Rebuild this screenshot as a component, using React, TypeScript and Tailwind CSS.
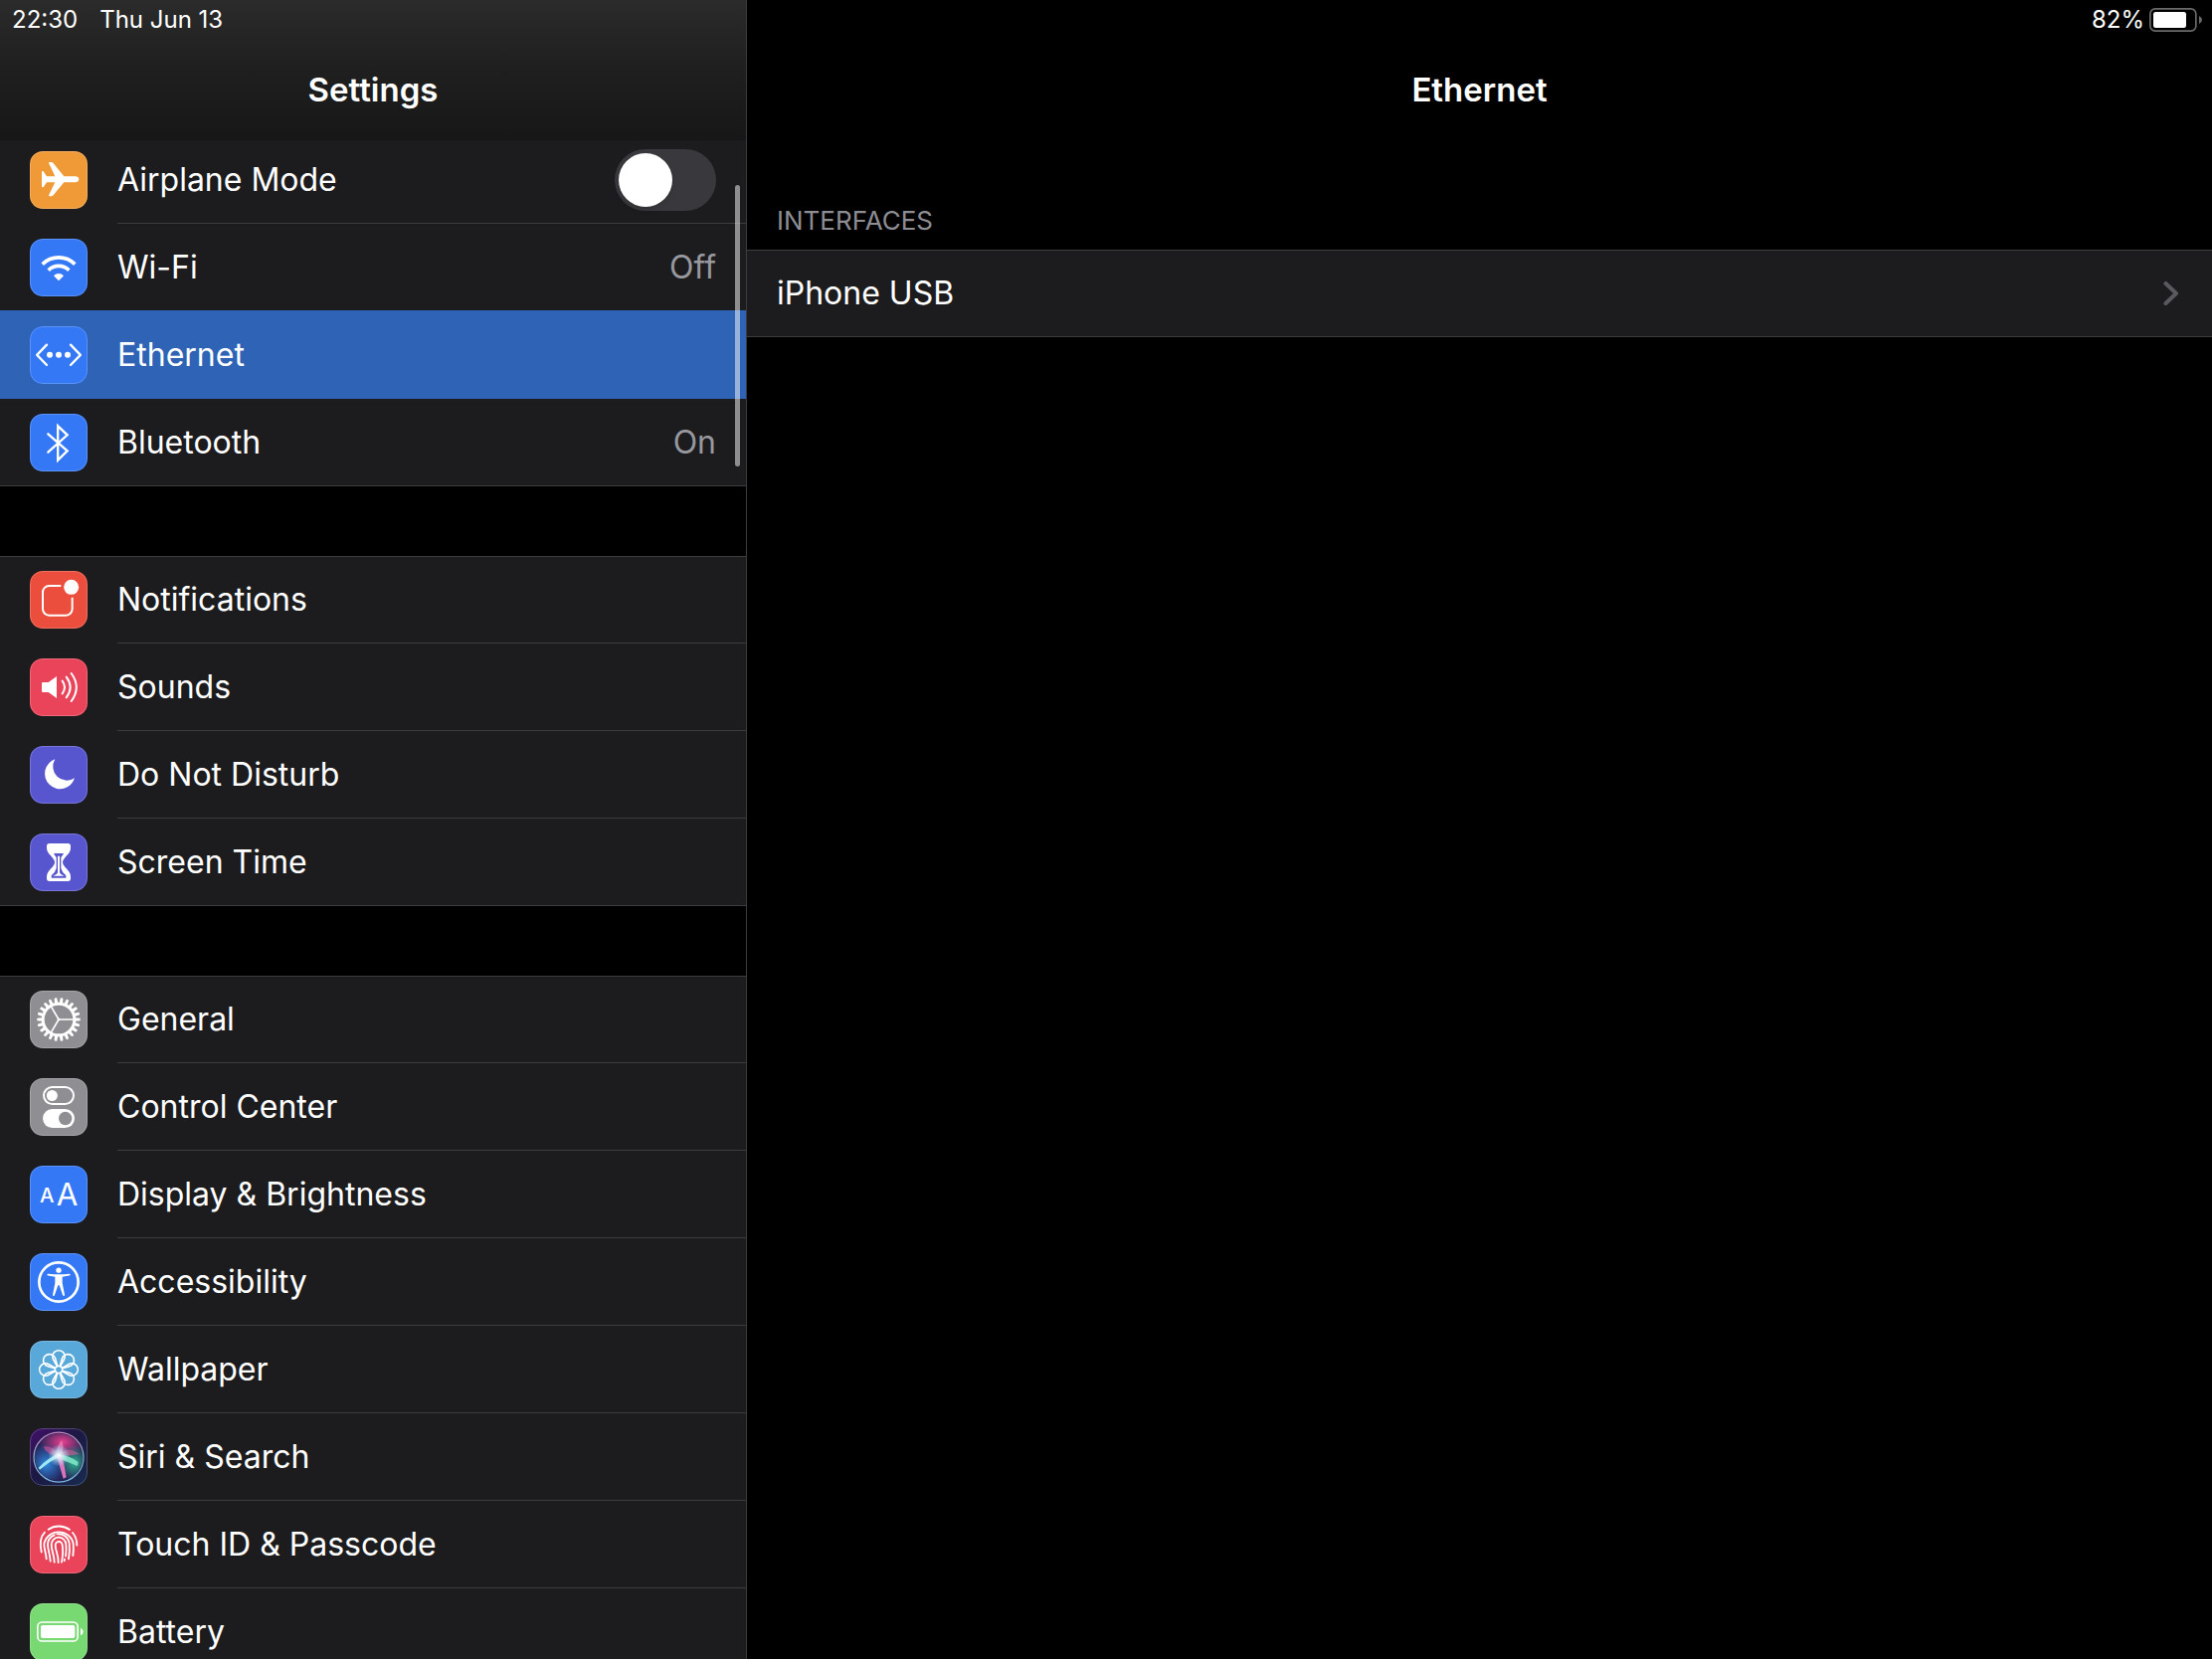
import { useState } from 'react'
import type { ReactNode } from 'react'

type Item = {
  id: string
  label: string
  color: string
  icon: ReactNode
  value?: string
}

const GEAR_TEETH = Array.from({ length: 22 }, (_, i) => (i * 360) / 22)
const PETALS = [0, 45, 90, 135, 180, 225, 270, 315]

// All glyphs share a 174 unit square, three units per pixel
function Glyph({ children }: { children: ReactNode }) {
  return (
    <svg viewBox="0 0 174 174" className="block w-full h-full" fill="none" aria-hidden="true">
      {children}
    </svg>
  )
}

const airplane = (
  <Glyph>
    <path
      fill="#fff"
      d="M148 84.500C148 79 143 75.500 137 75.500H103L70 35.500Q68 33 65 33H59Q56 33 57.500 37L76 75.500H51L42 62Q40.500 60 38.500 60Q36 60 36 62.500V106.500Q36 109 38.500 109Q40.500 109 42 107L51 93.500H76L57.500 132Q56 136 59 136H65Q68 136 70 133.500L103 93.500H137C143 93.500 148 90 148 84.500Z"
    />
  </Glyph>
)

const wifi = (
  <Glyph>
    <g stroke="#fff" strokeWidth="11">
      <path d="M38 77A69.500 69.500 0 0 1 136 77" />
      <path d="M56 95A43.500 43.500 0 0 1 118 95" />
    </g>
    <path fill="#fff" d="M87 127L72 111.500A21 21 0 0 1 102 111.500Z" />
  </Glyph>
)

const ethernet = (
  <Glyph>
    <g stroke="#fff" strokeWidth="7" strokeLinecap="round" strokeLinejoin="round">
      <path d="M51 56L21.500 86.500L51 117" />
      <path d="M123 56L152.500 86.500L123 117" />
    </g>
    <g fill="#fff">
      <circle cx="60" cy="86.500" r="9" />
      <circle cx="87" cy="86.500" r="9" />
      <circle cx="114" cy="86.500" r="9" />
    </g>
  </Glyph>
)

const bluetooth = (
  <Glyph>
    <path
      stroke="#fff"
      strokeWidth="7"
      strokeLinecap="round"
      d="M55 61L113 112L84.500 140V37L113 64L55 116"
    />
  </Glyph>
)

const notifications = (
  <Glyph>
    <path
      stroke="#fff"
      strokeWidth="6"
      d="M94 45H58a19 19 0 0 0-19 19v51a19 19 0 0 0 19 19h51a19 19 0 0 0 19-19V80"
    />
    <circle cx="125" cy="49" r="22.500" fill="#fff" />
  </Glyph>
)

const sounds = (
  <Glyph>
    <path fill="#fff" d="M39 72H56L81 54V120L56 102H39Q36 102 36 99V75Q36 72 39 72Z" />
    <g stroke="#fff" strokeWidth="6" strokeLinecap="round">
      <path d="M98 68Q112 87 98 106" />
      <path d="M110 56Q134 87 110 118" />
      <path d="M125 45Q156 87 125 129" />
    </g>
  </Glyph>
)

const moon = (
  <Glyph>
    <path fill="#fff" d="M76 40A46 46 0 1 0 135 97A42 42 0 0 1 76 40Z" />
  </Glyph>
)

const hourglass = (
  <Glyph>
    <path
      fill="#fff"
      d="M59 30H115Q123 30 123 38V45C123 62 99 73 99 87C99 101 123 112 123 129V136Q123 144 115 144H59Q51 144 51 136V129C51 112 75 101 75 87C75 73 51 62 51 45V38Q51 30 59 30Z"
    />
    <path
      fill="#5756ce"
      d="M72 60H102Q99 67 94 72V105Q97 117 109 127V134H65V127Q77 117 80 105V72Q75 67 72 60Z"
    />
    <path fill="#fff" d="M84 68H90V118Q91 123 104 128H70Q83 123 84 118Z" />
  </Glyph>
)

const gear = (
  <Glyph>
    <circle cx="87" cy="87" r="47.500" stroke="#fff" strokeWidth="9" />
    {GEAR_TEETH.map(a => (
      <path key={a} fill="#fff" transform={`rotate(${a} 87 87)`} d="M137 82L151.500 83Q154 87 151.500 91L137 92Z" />
    ))}
    <path stroke="#fff" strokeWidth="5" d="M87 87H132M87 87L64 47.500M87 87L64 126.500" />
    <circle cx="87" cy="87" r="4" fill="#fff" />
  </Glyph>
)

const toggles = (
  <Glyph>
    <rect x="42" y="27" width="90" height="51" rx="25.500" stroke="#fff" strokeWidth="6" />
    <circle cx="67" cy="52.500" r="16.500" fill="#fff" />
    <rect x="39" y="93" width="96" height="57" rx="28.500" fill="#fff" />
    <circle cx="107" cy="121.500" r="20" fill="#8e8e93" />
  </Glyph>
)

const letters = (
  <Glyph>
    <g fill="#fff" fontFamily="Inter, sans-serif" textAnchor="middle">
      <text x="51.500" y="111" fontSize="61" fontWeight="500">A</text>
      <text x="112.500" y="120" fontSize="94">A</text>
    </g>
  </Glyph>
)

const accessibility = (
  <Glyph>
    <circle cx="87" cy="87" r="59" stroke="#fff" strokeWidth="8" />
    <circle cx="87" cy="51.500" r="8" fill="#fff" />
    <path
      fill="#fff"
      d="M55 62Q71 64 87 64T119 62Q122 62 122 65Q122 67 119 67.500L98 71V90L105 125Q105.500 129 102.500 129Q100 129 99 126L89 97H85L75 126Q74 129 71.500 129Q68.500 129 69 125L76 90V71L55 67.500Q52 67 52 65Q52 62 55 62Z"
    />
  </Glyph>
)

const flower = (
  <Glyph>
    <g stroke="#fff" strokeWidth="5">
      {PETALS.map(a => (
        <path
          key={a}
          transform={`rotate(${a} 87 87)`}
          d="M83 78L71 57A18.500 18.500 0 1 1 103 57L91 78"
        />
      ))}
      <circle cx="87" cy="87" r="11" />
    </g>
  </Glyph>
)

const siri = (
  <Glyph>
    <defs>
      <linearGradient id="siri-bg" x1="0" y1="0" x2="1" y2="1">
        <stop offset="0" stopColor="#42106a" />
        <stop offset="0.45" stopColor="#1c1844" />
        <stop offset="1" stopColor="#182c50" />
      </linearGradient>
      <linearGradient id="siri-ring" x1="0" y1="0" x2="0" y2="1">
        <stop offset="0" stopColor="#c48ac0" />
        <stop offset="0.5" stopColor="#7fa9b4" />
        <stop offset="1" stopColor="#7cb4e0" />
      </linearGradient>
      <radialGradient id="siri-pink" cx="0.5" cy="0.5" r="0.5">
        <stop offset="0" stopColor="#e83f8e" />
        <stop offset="1" stopColor="#e83f8e" stopOpacity="0" />
      </radialGradient>
      <radialGradient id="siri-blue" cx="0.5" cy="0.5" r="0.5">
        <stop offset="0" stopColor="#2f8fe0" />
        <stop offset="1" stopColor="#2f6fd0" stopOpacity="0" />
      </radialGradient>
      <radialGradient id="siri-green" cx="0.5" cy="0.5" r="0.5">
        <stop offset="0" stopColor="#2fae90" />
        <stop offset="1" stopColor="#2fae90" stopOpacity="0" />
      </radialGradient>
      <radialGradient id="siri-core" cx="0.5" cy="0.5" r="0.5">
        <stop offset="0" stopColor="#fff" />
        <stop offset="0.4" stopColor="#d8f4ff" stopOpacity="0.7" />
        <stop offset="1" stopColor="#9fd8ff" stopOpacity="0" />
      </radialGradient>
      <clipPath id="siri-clip">
        <circle cx="87" cy="87.500" r="72" />
      </clipPath>
    </defs>
    <rect width="174" height="174" fill="url(#siri-bg)" />
    <g clipPath="url(#siri-clip)">
      <circle cx="87" cy="87.500" r="72" fill="#232558" />
      <ellipse cx="98" cy="42" rx="70" ry="46" fill="url(#siri-pink)" />
      <ellipse cx="50" cy="108" rx="58" ry="62" fill="url(#siri-blue)" />
      <ellipse cx="134" cy="104" rx="48" ry="54" fill="url(#siri-green)" />
      <path fill="#f05a9c" fillOpacity="0.5" d="M40 56Q70 50 87 82Q112 50 150 78Q120 84 87 84Q56 84 40 56Z" />
      <path fill="#f39ad0" fillOpacity="0.55" d="M96 36Q107 62 92 84H80Q76 62 96 36Z" />
      <path fill="#9fe9f4" d="M26 119Q52 92 86 76L92 86Q64 96 30 125Z" />
      <path fill="#7fe6c4" fillOpacity="0.9" d="M86 78Q124 84 146 102L144 114Q118 104 86 90Z" />
      <path fill="#ee7cc4" fillOpacity="0.9" d="M82 84L96 82Q106 116 110 148L101 152Q92 122 82 84Z" />
      <circle cx="88" cy="82" r="34" fill="url(#siri-core)" />
    </g>
    <circle cx="87" cy="87.500" r="75" stroke="url(#siri-ring)" strokeWidth="4" />
  </Glyph>
)

const fingerprint = (
  <Glyph>
    <g stroke="#fff" strokeWidth="5.500" strokeLinecap="round">
      <path d="M56 41A56 56 0 0 1 120 42" />
      <path d="M45 50C33 62 29 82 35 110" />
      <path d="M129 51C137 60 142 74 142 89" />
      <path d="M50 130C49 112 43 102 43 86A44.500 42 0 0 1 131 84C132 98 132 108 130 120" />
      <path d="M62 137C61 114 54 104 54 87A33 32 0 0 1 74 58" />
      <path d="M82 55A33 32 0 0 1 119 83C121 100 120 114 117 130" />
      <path d="M74 140C73 114 65 106 65 88A22 22 0 0 1 109 86C111 100 110 110 108 122" />
      <path d="M105 131L104 136" />
      <path d="M86 141C86 114 77 106 77 89A10.500 10.500 0 0 1 98 88C101 108 99 124 96 140" />
    </g>
  </Glyph>
)

const battery = (
  <Glyph>
    <rect x="23.500" y="57" width="121" height="57" rx="13" stroke="#fff" strokeWidth="5" />
    <rect x="33" y="66" width="103" height="39" rx="6" fill="#fff" />
    <path fill="#fff" d="M153 74Q161 78 161 85.500T153 97Z" />
  </Glyph>
)

const NETWORK: Item[] = [
  { id: 'wifi',      label: 'Wi-Fi',     color: 'bg-[#3478f6]', icon: wifi, value: 'Off' },
  { id: 'ethernet',  label: 'Ethernet',  color: 'bg-[#3478f6]', icon: ethernet },
  { id: 'bluetooth', label: 'Bluetooth', color: 'bg-[#3478f6]', icon: bluetooth, value: 'On' },
]

const ALERTS: Item[] = [
  { id: 'notifications', label: 'Notifications',  color: 'bg-[#eb4e3d]', icon: notifications },
  { id: 'sounds',        label: 'Sounds',         color: 'bg-[#ea445a]', icon: sounds },
  { id: 'dnd',           label: 'Do Not Disturb', color: 'bg-[#5756ce]', icon: moon },
  { id: 'screen-time',   label: 'Screen Time',    color: 'bg-[#5756ce]', icon: hourglass },
]

const SYSTEM: Item[] = [
  { id: 'general',        label: 'General',              color: 'bg-[#8e8e93]', icon: gear },
  { id: 'control-center', label: 'Control Center',       color: 'bg-[#8e8e93]', icon: toggles },
  { id: 'display',        label: 'Display & Brightness', color: 'bg-[#3478f6]', icon: letters },
  { id: 'accessibility',  label: 'Accessibility',        color: 'bg-[#3478f6]', icon: accessibility },
  { id: 'wallpaper',      label: 'Wallpaper',            color: 'bg-[#58a8d9]', icon: flower },
  { id: 'siri',           label: 'Siri & Search',        color: 'bg-[#1c1844]', icon: siri },
  { id: 'touch-id',       label: 'Touch ID & Passcode',  color: 'bg-[#ea445a]', icon: fingerprint },
  { id: 'battery',        label: 'Battery',              color: 'bg-[#78d872]', icon: battery },
]

function IconTile({ color, children }: { color: string; children: ReactNode }) {
  return (
    <span className={`relative block size-[58px] shrink-0 rounded-[13px] overflow-hidden ${color}`}>
      {children}
      <span className="absolute inset-0 rounded-[13px] border border-white/20" />
    </span>
  )
}

type RowProps = { item: Item; active: boolean; last: boolean; onSelect: (id: string) => void }

function Row({ item, active, last, onSelect }: RowProps) {
  return (
    <li>
      <a
        href={`#${item.id}`}
        aria-current={active ? 'page' : undefined}
        onClick={() => onSelect(item.id)}
        className={`flex items-center gap-[30px] pl-[30px] ${active ? 'relative -mt-px h-[89px] bg-[#2e63b6]' : 'h-[88px]'}`}
      >
        <IconTile color={item.color}>{item.icon}</IconTile>
        <span
          className={`flex flex-1 self-stretch items-center justify-between pr-[30px] ${
            active || last ? '' : 'border-b border-[#3c3c3f]'
          }`}
        >
          <span>{item.label}</span>
          {item.value && <span className="text-[#98989f]">{item.value}</span>}
        </span>
      </a>
    </li>
  )
}

export default function App() {
  const [selected, setSelected] = useState('ethernet')
  const [airplaneOn, setAirplaneOn] = useState(false)

  const renderRows = (items: Item[]) =>
    items.map((item, i) => (
      <Row
        key={item.id}
        item={item}
        active={item.id === selected}
        last={i === items.length - 1}
        onSelect={setSelected}
      />
    ))

  return (
    <div className="flex h-screen overflow-hidden bg-black text-white font-['Inter',sans-serif] text-[32px] leading-10">
      {/* Sidebar */}
      <aside className="relative w-[751px] shrink-0 overflow-hidden border-r border-[#3c3c3f]">
        <header className="relative z-10 -mb-1 h-[141px] border-b border-[#151515] bg-linear-to-b from-[#2b2b2b] via-[#1f1f1f] to-[#171717]">
          <div className="flex h-10 items-center gap-[22px] pl-3 text-2xl leading-6">
            <span>22:30</span>
            <span>Thu Jun 13</span>
          </div>
          <h1 className="pt-[30px] text-center text-[33px] font-semibold">Settings</h1>
        </header>

        <nav aria-label="Settings" className="space-y-[70px]">
          <ul className="border-b border-[#3c3c3f] bg-[#1c1c1e] [&>li:last-child]:-mb-px">
            <li className="flex h-[88px] items-center gap-[30px] pl-[30px]">
              <IconTile color="bg-[#f09a37]">{airplane}</IconTile>
              <div className="flex flex-1 self-stretch items-center justify-between border-b border-[#3c3c3f] pr-[30px]">
                <label htmlFor="airplane-mode">Airplane Mode</label>
                <input
                  id="airplane-mode"
                  type="checkbox"
                  role="switch"
                  checked={airplaneOn}
                  onChange={e => setAirplaneOn(e.target.checked)}
                  className="flex h-[62px] w-[102px] appearance-none items-center rounded-full bg-[#39393d] px-1 before:size-[54px] before:rounded-full before:bg-white before:shadow-md checked:justify-end checked:bg-[#30d158]"
                />
              </div>
            </li>
            {renderRows(NETWORK)}
          </ul>
          <ul className="border-y border-[#3c3c3f] bg-[#1c1c1e] [&>li:first-child]:-mt-px [&>li:last-child]:-mb-px">{renderRows(ALERTS)}</ul>
          <ul className="border-y border-[#3c3c3f] bg-[#1c1c1e] [&>li:first-child]:-mt-px">{renderRows(SYSTEM)}</ul>
        </nav>

        {/* Scroll indicator */}
        <div className="absolute top-[186px] right-[6px] z-20 h-[283px] w-[5px] rounded-full bg-white/50" />
      </aside>

      {/* Detail */}
      <main className="min-w-0 flex-1">
        <header>
          <div className="flex h-10 items-center justify-end gap-[5px] pr-[10px] text-2xl leading-6">
            <span>82%</span>
            <svg viewBox="0 0 159 72" className="h-6 w-[53px]" fill="none" aria-hidden="true">
              <rect x="2.500" y="2.500" width="138" height="67" rx="15" stroke="#6b6b6b" strokeWidth="5" />
              <rect x="12" y="12" width="99" height="48" rx="7" fill="#fff" />
              <path fill="#6b6b6b" d="M150 24Q159 28 159 36T150 48Z" />
            </svg>
          </div>
          <h2 className="pt-[30px] text-center text-[33px] font-semibold">Ethernet</h2>
        </header>

        <section className="pt-24">
          <h3 className="pl-[30px] pb-[13px] text-[26px] leading-8 text-[#8d8d93]">INTERFACES</h3>
          <a
            href="#iphone-usb"
            className="flex h-[88px] items-center justify-between border-y border-[#3c3c3f] bg-[#1c1c1e] pl-[30px] pr-[33px]"
          >
            <span>iPhone USB</span>
            <svg viewBox="0 0 16 24" className="h-6 w-4" fill="none" aria-hidden="true">
              <path d="M2.500 2L13 12L2.500 22" stroke="#5a5a5e" strokeWidth="4" strokeLinecap="round" strokeLinejoin="round" />
            </svg>
          </a>
        </section>
      </main>
    </div>
  )
}
